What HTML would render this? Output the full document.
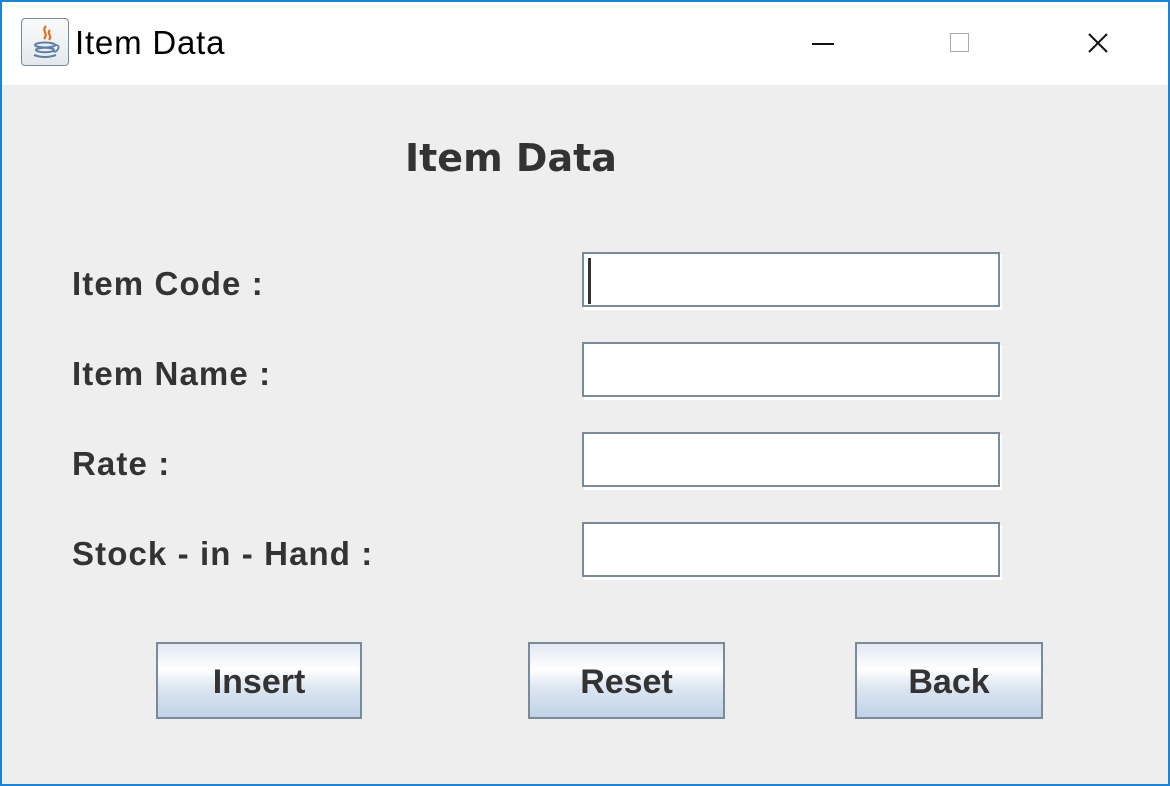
<!DOCTYPE html>
<html><head><style>
body{margin:0;width:1170px;height:786px;overflow:hidden;font-family:"Liberation Sans",sans-serif;}
.win{position:absolute;left:0;top:0;width:1166px;height:782px;border:2px solid #1c84d6;background:#eeeeee;}
.tb{position:absolute;left:0;top:0;width:1166px;height:83px;background:#fff;}
.lbl{position:absolute;left:70px;font-weight:bold;font-size:33px;letter-spacing:1.1px;color:#333;}
.tf{position:absolute;left:580px;width:414px;height:51px;border:2px solid #7b8a99;background:#fff;box-shadow:2px 3px 0 #fff;}
.btn{position:absolute;top:640px;height:73px;border:2px solid #7b8a99;background:linear-gradient(#e2e8f3,#ffffff 35%,#dde6f1 60%,#c0d2e7);font-weight:bold;font-size:34px;color:#333;text-align:center;line-height:76px;}
</style></head><body>
<div class="win">
<div class="tb">
 <div style="position:absolute;left:19px;top:16px;width:46px;height:46px;border:1px solid #7a8a99;border-radius:4px;background:linear-gradient(#fafafa,#e4e8ec);"></div>
 <svg style="position:absolute;left:19px;top:16px" width="48" height="48" viewBox="0 0 48 48">
  <path d="M25 8c-5 5 3 7-2 13M29 12c-4 4 3 5-1 10" stroke="#e76f1b" stroke-width="2.2" fill="none"/>
  <ellipse cx="24" cy="27" rx="10" ry="2.5" fill="none" stroke="#5a7fa3" stroke-width="2"/>
  <ellipse cx="24" cy="32" rx="9" ry="2.2" fill="none" stroke="#5a7fa3" stroke-width="2"/>
  <path d="M13 37q11 4 22 0" stroke="#5a7fa3" stroke-width="2" fill="none"/>
  <path d="M34 27q5 0 3 4t-5 2" stroke="#5a7fa3" stroke-width="1.8" fill="none"/>
 </svg>
 <div style="position:absolute;left:73px;top:22px;font-size:33px;letter-spacing:0.8px;color:#000;">Item Data</div>
 <div style="position:absolute;left:810px;top:41px;width:22px;height:2px;background:#111;"></div>
 <div style="position:absolute;left:948px;top:31px;width:17px;height:17px;border:1px solid #aaa;"></div>
 <svg style="position:absolute;left:1085px;top:30px" width="22" height="22"><path d="M2 2L20 20M20 2L2 20" stroke="#111" stroke-width="2"/></svg>
</div>
<div style="position:absolute;left:403px;top:134px;font-family:'DejaVu Sans',sans-serif;font-weight:bold;font-size:38px;color:#333;">Item Data</div>
<div class="lbl" style="top:263px">Item Code :</div>
<div class="lbl" style="top:353px">Item Name :</div>
<div class="lbl" style="top:443px">Rate :</div>
<div class="lbl" style="top:533px">Stock - in - Hand :</div>
<div class="tf" style="top:250px"><div style="position:absolute;left:4px;top:4px;width:3px;height:46px;background:#333"></div></div>
<div class="tf" style="top:340px"></div>
<div class="tf" style="top:430px"></div>
<div class="tf" style="top:520px"></div>
<div class="btn" style="left:154px;width:202px">Insert</div>
<div class="btn" style="left:526px;width:193px">Reset</div>
<div class="btn" style="left:853px;width:184px">Back</div>
</div>
</body></html>
